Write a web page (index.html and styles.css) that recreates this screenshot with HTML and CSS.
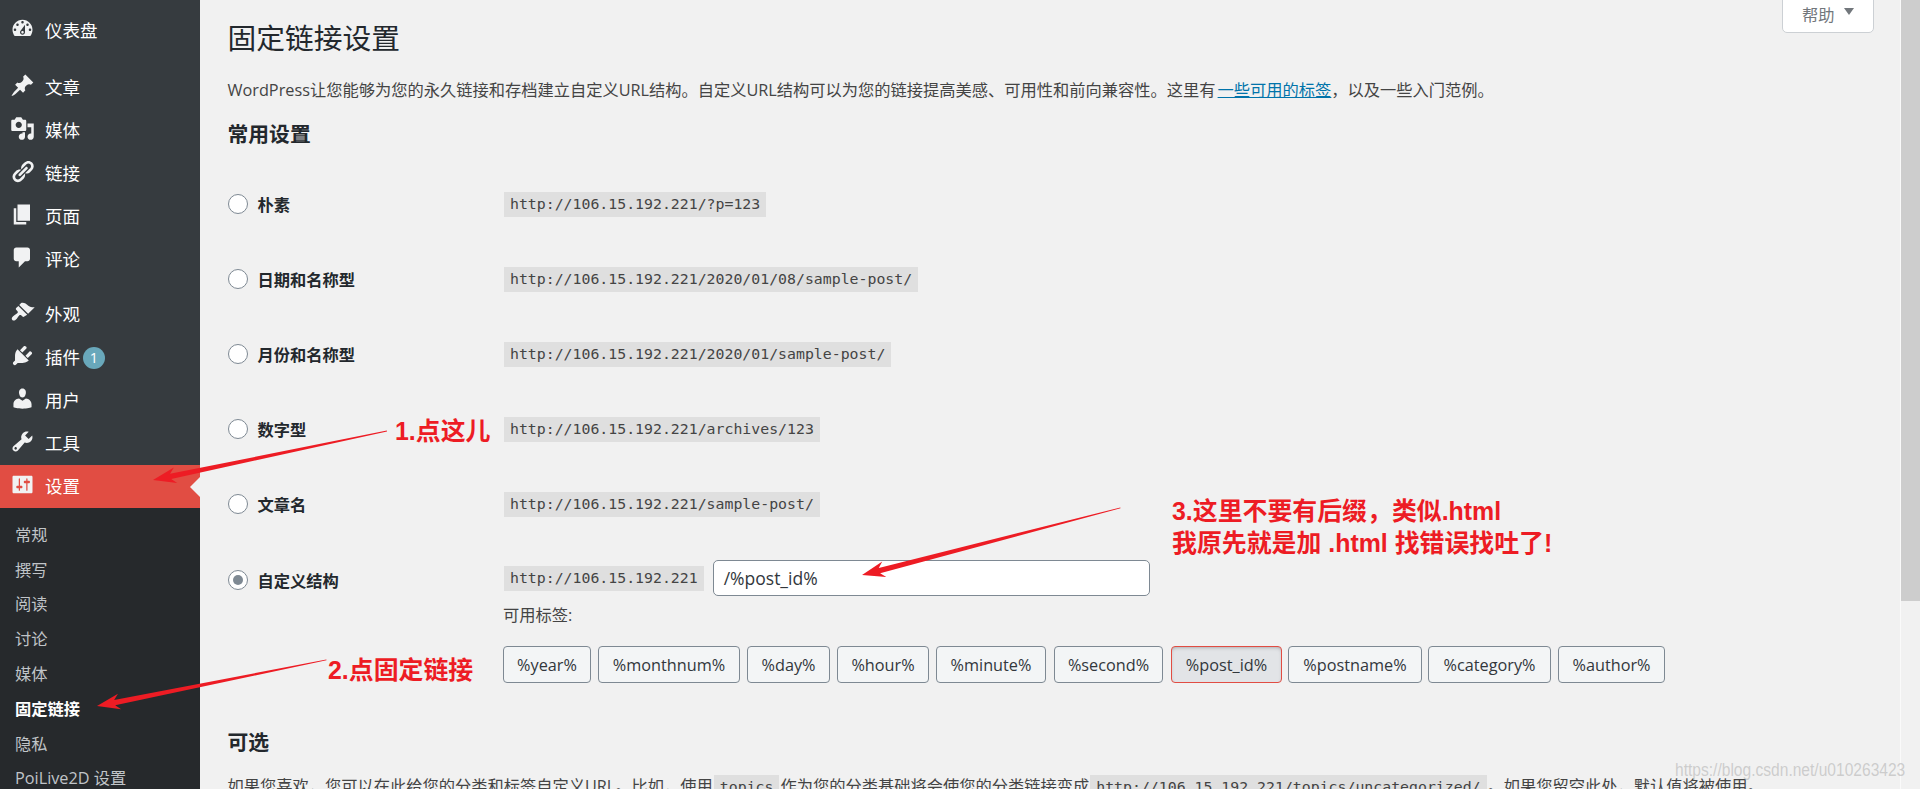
FILE: index.html
```html
<!DOCTYPE html>
<html lang="zh-CN">
<head>
<meta charset="utf-8">
<title>固定链接设置</title>
<link rel="stylesheet" href="styles.css">
</head>
<body>
<aside class="sidebar">
  <nav class="menu">
    <a class="item gap-s"><svg class="ico" viewBox="0 0 20 20"><path fill-rule="evenodd" d="M3.76 16h12.48c1.1-1.37 1.76-3.11 1.76-5 0-4.42-3.58-8-8-8s-8 3.58-8 8c0 1.89.66 3.63 1.76 5zM10 4c.55 0 1 .45 1 1s-.45 1-1 1-1-.45-1-1 .45-1 1-1zM6 6c.55 0 1 .45 1 1s-.45 1-1 1-1-.45-1-1 .45-1 1-1zm8 0c.55 0 1 .45 1 1s-.45 1-1 1-1-.45-1-1 .45-1 1-1zm-5.37 5.55L12 7v6c0 1.1-.9 2-2 2s-2-.9-2-2c0-.57.24-1.08.63-1.45zM4 10c.55 0 1 .45 1 1s-.45 1-1 1-1-.45-1-1 .45-1 1-1zm12 0c.55 0 1 .45 1 1s-.45 1-1 1-1-.45-1-1 .45-1 1-1zm-5 3c0-.55-.45-1-1-1s-1 .45-1 1 .45 1 1 1 1-.45 1-1z"/></svg><span>仪表盘</span></a>
    <a class="item"><svg class="ico" viewBox="0 0 20 20"><path d="M10.44 3.02l1.82-1.82 6.36 6.35-1.83 1.82c-1.05-.68-2.48-.57-3.41.36l-.75.75c-.92.93-1.04 2.35-.35 3.41l-1.83 1.82-2.41-2.41-2.8 2.79c-.42.42-3.38 2.71-3.8 2.29s1.86-3.39 2.28-3.81l2.79-2.79L4.1 9.36l1.83-1.82c1.05.69 2.48.57 3.4-.36l.75-.75c.93-.92 1.05-2.35.36-3.41z"/></svg><span>文章</span></a>
    <a class="item"><svg class="ico" viewBox="0 0 20 20"><path fill-rule="evenodd" d="M13 11V4c0-.55-.45-1-1-1h-1.67L9 1H5L3.67 3H2c-.55 0-1 .45-1 1v7c0 .55.45 1 1 1h10c.55 0 1-.45 1-1zM7 4.5c1.38 0 2.5 1.12 2.5 2.5S8.38 9.5 7 9.5 4.5 8.38 4.5 7 5.62 4.5 7 4.5zM14 6h5v10.5c0 1.38-1.12 2.5-2.5 2.5S14 17.88 14 16.5s1.12-2.5 2.5-2.5c.17 0 .34.02.5.05V9h-3V6zm-4 8.05V13h2v3.5c0 1.38-1.12 2.5-2.5 2.5S7 17.88 7 16.5 8.12 14 9.5 14c.17 0 .34.02.5.05z"/></svg><span>媒体</span></a>
    <a class="item"><svg class="ico" viewBox="0 0 20 20"><path d="M17.74 2.76c1.68 1.69 1.68 4.41 0 6.1l-1.53 1.52c-1.12 1.12-2.7 1.47-4.14 1.09l2.62-2.61.76-.77.76-.76c.84-.84.84-2.2 0-3.04-.84-.85-2.2-.85-3.04 0l-.77.76-3.38 3.38c-.37-1.44-.02-3.02 1.1-4.14l1.52-1.53c1.69-1.68 4.42-1.68 6.1 0zM8.59 13.43l5.34-5.34c.42-.42.42-1.1 0-1.52-.44-.43-1.13-.39-1.53 0l-5.33 5.34c-.42.42-.42 1.1 0 1.52.44.43 1.13.39 1.52 0zm-.76 2.29l4.14-4.15c.38 1.44.03 3.02-1.09 4.14l-1.52 1.53c-1.69 1.68-4.41 1.68-6.1 0-1.68-1.68-1.68-4.42 0-6.1l1.53-1.52c1.12-1.12 2.7-1.47 4.14-1.1l-4.14 4.15c-.85.84-.85 2.2 0 3.05.84.84 2.2.84 3.04 0z"/></svg><span>链接</span></a>
    <a class="item"><svg class="ico" viewBox="0 0 20 20"><path d="M6 15V2h10v13H6zm-1 1h8v2H3V5h2v11z"/></svg><span>页面</span></a>
    <a class="item gap-m"><svg class="ico" viewBox="0 0 20 20"><path d="M5 2h9c1.1 0 2 .9 2 2v7c0 1.1-.9 2-2 2h-2l-5 5v-5H5c-1.1 0-2-.9-2-2V4c0-1.1.9-2 2-2z"/></svg><span>评论</span></a>
    <a class="item"><svg class="ico" viewBox="0 0 20 20"><path d="M14.48 11.06L7.41 3.99l1.5-1.5c.5-.56 2.3-.47 3.51.32 1.21.8 1.43 1.28 2.91 2.1 1.18.64 2.45 1.26 4.45.85zm-.71.71L6.7 4.7 4.93 6.47c-.39.39-.39 1.02 0 1.41l1.06 1.06c.39.39.39 1.03 0 1.42-.6.6-1.43 1.11-2.21 1.69-.35.26-.7.53-1.01.84C1.43 13.71.96 15.12 1.85 16s2.3.41 3.13-.55c.31-.31.59-.66.85-1.01.58-.78 1.08-1.61 1.69-2.21.39-.39 1.02-.39 1.41 0l1.06 1.06c.39.39 1.02.39 1.41 0z"/></svg><span>外观</span></a>
    <a class="item"><svg class="ico" viewBox="0 0 20 20"><path d="M13.11 4.36L9.87 7.6 8 5.73l3.24-3.24c.35-.34 1.05-.2 1.56.32.52.51.66 1.21.31 1.55zm-8 1.77l.91-1.12 9.01 9.01-1.19.84c-.71.71-2.63 1.16-3.82 1.16H6.14L4.9 17.26c-.59.59-1.54.59-2.12 0-.59-.58-.59-1.53 0-2.12l1.24-1.24v-3.88c0-1.13.4-3.19 1.09-3.89zm7.26 3.97l3.24-3.24c.34-.35 1.04-.21 1.55.31.52.51.66 1.21.31 1.55l-3.24 3.25z"/></svg><span>插件</span><b class="badge">1</b></a>
    <a class="item"><svg class="ico" viewBox="0 0 20 20"><path d="M10 9.25c-2.27 0-2.73-3.44-2.73-3.44C7 4.02 7.82 2 9.97 2c2.16 0 2.98 2.02 2.71 3.81 0 0-.41 3.44-2.68 3.44zm0 2.57L12.72 10c2.39 0 4.52 2.33 4.52 4.53v2.49s-3.65 1.13-7.24 1.13c-3.65 0-7.24-1.13-7.24-1.13v-2.49c0-2.25 1.94-4.48 4.47-4.48z"/></svg><span>用户</span></a>
    <a class="item"><svg class="ico" viewBox="0 0 20 20"><path fill-rule="evenodd" d="M16.68 9.77c-1.34 1.34-3.3 1.67-4.95.99l-5.41 6.52c-.99.99-2.59.99-3.58 0s-.99-2.59 0-3.57l6.52-5.42c-.68-1.65-.35-3.61.99-4.95 1.28-1.28 3.12-1.62 4.72-1.06l-2.89 2.89 2.82 2.82 2.86-2.87c.53 1.58.18 3.39-1.08 4.65zM3.81 16.21c.4.39 1.04.39 1.43 0 .4-.4.4-1.04 0-1.43-.39-.4-1.03-.4-1.43 0-.39.39-.39 1.03 0 1.43z"/></svg><span>工具</span></a>
    <a class="item active"><svg class="ico" viewBox="0 0 20 20"><path fill-rule="evenodd" d="M18 16V4c0-.55-.45-1-1-1H3c-.55 0-1 .45-1 1v12c0 .55.45 1 1 1h14c.55 0 1-.45 1-1zM8 11h1c.55 0 1 .45 1 1s-.45 1-1 1H8v1.5c0 .28-.22.5-.5.5s-.5-.22-.5-.5V13H6c-.55 0-1-.45-1-1s.45-1 1-1h1V5.5c0-.28.22-.5.5-.5s.5.22.5.5V11zm5-2h-1c-.55 0-1-.45-1-1s.45-1 1-1h1V5.5c0-.28.22-.5.5-.5s.5.22.5.5V7h1c.55 0 1 .45 1 1s-.45 1-1 1h-1v5.5c0 .28-.22.5-.5.5s-.5-.22-.5-.5V9z"/></svg><span>设置</span></a>
    <div class="submenu">
      <a class="subitem">常规</a>
      <a class="subitem">撰写</a>
      <a class="subitem">阅读</a>
      <a class="subitem">讨论</a>
      <a class="subitem">媒体</a>
      <a class="subitem current">固定链接</a>
      <a class="subitem">隐私</a>
      <a class="subitem">PoiLive2D 设置</a>
    </div>
  </nav>
</aside>
<main class="content">
  <h1 class="title">固定链接设置</h1>
  <p class="intro">WordPress让您能够为您的永久链接和存档建立自定义URL结构。自定义URL结构可以为您的链接提高美感、可用性和前向兼容性。这里有<a class="link">一些可用的标签</a>，以及一些入门范例。</p>
  <h2 class="section">常用设置</h2>
  <div class="row"><label class="opt"><i class="radio"></i>朴素</label><code class="url">http://106.15.192.221/?p=123</code></div>
  <div class="row"><label class="opt"><i class="radio"></i>日期和名称型</label><code class="url">http://106.15.192.221/2020/01/08/sample-post/</code></div>
  <div class="row"><label class="opt"><i class="radio"></i>月份和名称型</label><code class="url">http://106.15.192.221/2020/01/sample-post/</code></div>
  <div class="row"><label class="opt"><i class="radio"></i>数字型</label><code class="url">http://106.15.192.221/archives/123</code></div>
  <div class="row"><label class="opt"><i class="radio"></i>文章名</label><code class="url">http://106.15.192.221/sample-post/</code></div>
  <div class="row custom">
    <label class="opt"><i class="radio on"></i>自定义结构</label>
    <div class="custom-body">
      <div class="custom-line"><code class="url">http://106.15.192.221</code><div class="field">/%post_id%</div></div>
      <p class="tags-label">可用标签:</p>
      <div class="tags">
        <button class="tag t-year">%year%</button>
        <button class="tag t-monthnum">%monthnum%</button>
        <button class="tag t-day">%day%</button>
        <button class="tag t-hour">%hour%</button>
        <button class="tag t-minute">%minute%</button>
        <button class="tag t-second">%second%</button>
        <button class="tag t-post pressed">%post_id%</button>
        <button class="tag t-postname">%postname%</button>
        <button class="tag t-category">%category%</button>
        <button class="tag t-author">%author%</button>
      </div>
    </div>
  </div>
  <h2 class="section optional">可选</h2>
  <p class="outro">如果您喜欢，您可以在此给您的分类和标签自定义URL。比如，使用<code class="url inline">topics</code>作为您的分类基础将会使您的分类链接变成<code class="url inline">http://106.15.192.221/topics/uncategorized/</code>。如果您留空此处，默认值将被使用。</p>
</main>
<div class="scrollbar"><div class="thumb"></div></div>

<div class="help">帮助<i class="caret"></i></div>

<svg class="arrows" viewBox="0 0 1920 789">
  <path transform="translate(153 480) rotate(-11.83)" d="M0 0L23-8 18-2.6 239-.4V.4L18 2.8 23 8Z"/>
  <path transform="translate(97 706) rotate(-11.36)" d="M0 0L23-8 18-2.6 234-.4V.4L18 2.8 23 8Z"/>
  <path transform="translate(862 575) rotate(-14.56)" d="M0 0L23-8 18-2.6 267-.4V.4L18 2.8 23 8Z"/>
</svg>
<div class="note n1">1.点这儿</div>
<div class="note n2">2.点固定链接</div>
<div class="note n3">3.这里不要有后缀，类似.html<br>我原先就是加 .html 找错误找吐了!</div>
<div class="watermark">https://blog.csdn.net/u010263423</div>
</body>
</html>
```
FILE: styles.css
```css
* { box-sizing: border-box; }
html, body { margin: 0; height: 100%; overflow: hidden; }
body {
  display: flex;
  background: #f1f1f1;
  color: #444;
  font-family: "Open Sans", "Noto Sans CJK SC", sans-serif;
  font-size: 16.25px;
  position: relative;
}
/* sidebar */
.sidebar { flex: 0 0 200px; background: #363b3f; height: 100%; overflow: hidden; }
.menu { padding-top: 9px; }
.item {
  display: flex; align-items: center;
  height: 43px;
  padding-left: 10px;
  color: #fff;
  font-size: 17.5px;
  position: relative;
}
.item span { margin-top: -2px; }
.ico { width: 25px; height: 25px; flex: none; fill: #f1f2f3; margin: -5px 10px 0 0; }
.gap-s { margin-bottom: 14px; }
.gap-m { margin-bottom: 12px; }
.badge {
  width: 22px; height: 22px; border-radius: 50%;
  background: #69a8bb; color: #fff;
  font-size: 14.5px; font-weight: 400; line-height: 22px; text-align: center;
  margin: 0 0 0 3px;
}
.active { background: #e14d43; }
.active::after {
  content: ""; position: absolute; right: 0; top: 50%; margin-top: -10px;
  border: 10px solid transparent; border-left: 0; border-right-color: #f1f1f1;
}
.submenu { background: #26292c; padding-top: 8.4px; height: 300px; }
.subitem {
  display: flex; align-items: center;
  height: 34.8px;
  padding-left: 15px;
  color: #c0c4c8;
  white-space: nowrap;
}
.current { color: #fff; font-weight: 700; }
/* content */
.content { flex: 1; min-width: 0; padding: 18px 0 0 27.5px; overflow: hidden; }
.title { margin: 0; font-size: 28.75px; font-weight: 400; line-height: 40px; color: #23282d; }
.intro { margin: 20px 0 0; line-height: 24px; white-space: nowrap; }
.link { color: #0073aa; text-decoration: underline; margin-left: 2px; }
.section { margin: 18px 0 18.5px; font-size: 20.8px; font-weight: 700; line-height: 28px; color: #23282d; }
.row { display: flex; align-items: center; height: 75px; }
.opt {
  flex: 0 0 276.5px;
  display: flex; align-items: center;
  font-weight: 700; color: #23282d;
}
.radio {
  width: 20px; height: 20px; border-radius: 50%;
  border: 1px solid #7e8993; background: #fff;
  margin-right: 10px; flex: none; position: relative;
}
.radio.on::before {
  content: ""; position: absolute; left: 4px; top: 4px;
  width: 10px; height: 10px; border-radius: 50%; background: #7e8993;
}
.url {
  font-family: "DejaVu Sans Mono", monospace;
  font-size: 14.85px;
  line-height: 25px; height: 25px;
  padding: 0 6px;
  background: #dfdfdf;
  color: #444;
  white-space: nowrap;
}
.custom { height: auto; align-items: flex-start; padding-top: 18.5px; }
.custom .opt { height: 40px; }
.custom-line { display: flex; align-items: center; gap: 9px; height: 36px; }
.field {
  width: 437px; height: 36px;
  background: #fff; border: 1px solid #7e8993; border-radius: 5px;
  padding: 0 10px; line-height: 34px;
  font-size: 17.5px; color: #32373c;
}
.tags-label { margin: 7px 0 0 -1px; line-height: 24px; }
.tags { display: flex; gap: 7px; margin: 19px 0 0 -1px; }
.tag {
  height: 37px; padding: 0;
  font: inherit; color: #32373c;
  background: #f3f5f6; border: 1px solid #7e8993; border-radius: 4px;
  white-space: nowrap; text-align: center;
}
.t-year { width: 88px; }
.t-monthnum { width: 142px; }
.t-day { width: 83px; }
.t-hour { width: 92px; }
.t-minute { width: 110px; }
.t-second { width: 109px; margin-left: 1px; }
.t-post { width: 111px; margin-left: 1px; }
.t-postname { width: 134px; margin-left: -1px; }
.t-category { width: 123px; margin-left: -1px; }
.t-author { width: 107px; }
.pressed { background: #e2e4e7; border-color: #e14d43; box-shadow: inset 0 2px 5px -3px rgba(0,0,0,.5); }
.optional { margin: 45px 0 18px; }
.outro { margin: 0; line-height: 24px; white-space: nowrap; }
.inline { display: inline-block; margin: 0 1px; }
/* scrollbar */
.scrollbar { flex: 0 0 20px; background: #f1f1f1; border-left: 1px solid #fafafa; }
.thumb { height: 601px; background: #cdcdcd; }
/* overlays */
.help {
  position: absolute; top: -1px; left: 1782px; width: 92px; height: 34px;
  background: #fff; border: 1px solid #ccd0d4; border-radius: 0 0 5px 5px;
  color: #72777c; padding-left: 19px; line-height: 30px;
}
.caret {
  position: absolute; left: 61px; top: 8px;
  border: 5.5px solid transparent; border-top: 7px solid #72777c; border-bottom: 0;
}
.arrows { position: absolute; left: 0; top: 0; width: 1920px; height: 789px; pointer-events: none; }
.arrows path { fill: #ed1c24; }
.note {
  position: absolute; color: #ed1c24; font-weight: 700; font-size: 24.9px;
  line-height: 32px; white-space: nowrap;
  font-family: "Liberation Sans", "Noto Sans CJK SC", sans-serif;
}
.n1 { left: 395px; top: 415px; }
.n2 { left: 328px; top: 654px; }
.n3 { left: 1172px; top: 495px; }
.watermark {
  position: absolute; left: 1675px; top: 755px;
  font-family: "Liberation Sans", sans-serif; font-size: 18px; line-height: 30px;
  color: rgba(180,180,180,.6); white-space: nowrap;
  transform: scaleX(.865); transform-origin: left center;
}
```
